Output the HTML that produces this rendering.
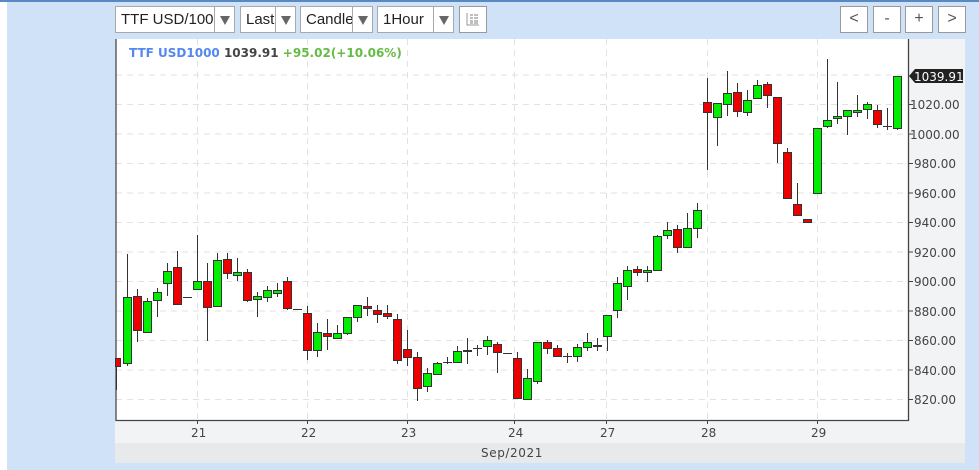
<!DOCTYPE html>
<html><head><meta charset="utf-8"><style>
body{margin:0;width:979px;height:470px;background:#cfe2f8;position:relative;overflow:hidden;font-family:"Liberation Sans",sans-serif}
.l{position:absolute;left:0;top:0;width:7px;height:470px;background:#fff}
.t{position:absolute;left:0;top:0;width:979px;height:2px;background:#5a88c2}
.sel{position:absolute;top:6px;height:25px;border:1px solid #a9a9a9;background:#fff;font-size:15px;line-height:25px;color:#222;overflow:hidden;box-sizing:content-box}
.sel span{position:absolute;left:5px;top:0;white-space:nowrap}
.sel i{position:absolute;right:0;top:0;width:19px;height:25px;border-left:1px solid #a9a9a9;background:#fff}
.sel i:after{content:"";position:absolute;left:5px;top:9px;border-left:5px solid transparent;border-right:5px solid transparent;border-top:9px solid #666}
.btn{position:absolute;top:6px;width:26px;height:25px;border:1px solid #999;background:#fff;text-align:center;line-height:24px;font-size:16px;color:#555}
</style></head><body>
<div class="l"></div><div class="t"></div>
<div class="sel" style="left:115px;width:118px"><span>TTF USD/1000</span><i></i></div>
<div class="sel" style="left:240px;width:54px"><span>Last</span><i></i></div>
<div class="sel" style="left:300px;width:71px"><span>Candle</span><i></i></div>
<div class="sel" style="left:377px;width:75px"><span>1Hour</span><i></i></div>
<div class="btn" style="left:459px;"><svg width="14" height="14" viewBox="0 0 14 14" style="margin-top:5px"><path d="M1 1V13H13" stroke="#999" fill="none"/><path d="M4 3h3M8 3h4M4 6h3M8 6h4M4 9h3M8 9h4M4 11h3M8 11h4" stroke="#aaa" stroke-width="1.4"/></svg></div>
<div class="btn" style="left:840px">&lt;</div>
<div class="btn" style="left:873px">-</div>
<div class="btn" style="left:905px">+</div>
<div class="btn" style="left:938px">&gt;</div>
<svg style="position:absolute;left:0;top:0" width="979" height="470" font-family="DejaVu Sans,sans-serif">
<rect x="115" y="39" width="850" height="424" fill="#f2f3f5"/>
<rect x="115" y="443" width="850" height="20" fill="#e8e9eb"/>
<rect x="116" y="39" width="792" height="381" fill="#fff"/>
<g stroke="#e2e2e2" stroke-dasharray="6,5" stroke-width="1">
<path d="M116 399.5H908M116 370H908M116 340.5H908M116 311H908M116 281.5H908M116 252H908M116 222.5H908M116 193H908M116 163.5H908M116 134H908M116 104.5H908M116 75H908"/>
<path d="M197.5 39V420M307.5 39V420M407.5 39V420M514.5 39V420M606.5 39V420M707.5 39V420M817.5 39V420"/>
</g>
<path d="M116 39V420.5H908.5V39" stroke="#444" fill="none" stroke-width="1.3"/>
<g stroke="#444"><path d="M908 399.5h5M908 370h5M908 340.5h5M908 311h5M908 281.5h5M908 252h5M908 222.5h5M908 193h5M908 163.5h5M908 134h5M908 104.5h5M197.5 420v4M307.5 420v4M407.5 420v4M514.5 420v4M606.5 420v4M707.5 420v4M817.5 420v4"/></g>
<g font-size="12" fill="#444">
<text x="914" y="404">820.00</text><text x="914" y="375">840.00</text><text x="914" y="345">860.00</text><text x="914" y="316">880.00</text><text x="914" y="286">900.00</text><text x="914" y="257">920.00</text><text x="914" y="227">940.00</text><text x="914" y="198">960.00</text><text x="914" y="168">980.00</text><text x="910" y="139">1000.00</text><text x="910" y="109">1020.00</text>
<text x="191" y="437">21</text><text x="301" y="437">22</text><text x="401" y="437">23</text><text x="508" y="437">24</text><text x="600" y="437">27</text><text x="701" y="437">28</text><text x="811" y="437">29</text>
<text x="481" y="457" letter-spacing="0.6">Sep/2021</text>
</g>
<path d="M909 76l6-7h48v14h-48z" fill="#222"/>
<text x="914" y="81" font-size="12" fill="#fff">1039.91</text>
<text x="129" y="57" font-size="12" font-weight="bold"><tspan fill="#5588ee">TTF USD1000</tspan><tspan fill="#444"> 1039.91</tspan><tspan fill="#66bb44"> +95.02(+10.06%)</tspan></text>
<g stroke="#333" stroke-width="1">
<path d="M116.5 358V390M127.5 254V366M137.5 289V342M147.5 298V333M157.5 288V317M167.5 263V296M177.5 251V304M197.5 235V289M207.5 263V341M217.5 253V306M227.5 253V279M237.5 258V281M247.5 269V302M257.5 292V317M267.5 286V302M277.5 283V297M287.5 277V310M307.5 306V360M317.5 323V357M327.5 319V350M337.5 325V338M347.5 317V335M357.5 305V322M367.5 297V316M377.5 305V323M387.5 305V319M397.5 314V364M407.5 330V366M417.5 352V401M427.5 368V392M437.5 362V375M447.5 357V364M457.5 346V363M467.5 338V364M477.5 345V356M487.5 336V355M497.5 342V373M517.5 352V398M527.5 369V400M537.5 342V384M547.5 340V354M557.5 345V356M567.5 353V363M577.5 344V362M587.5 333V351M597.5 338V351M607.5 315V351M617.5 277V318M627.5 266V300M637.5 266V276M647.5 266V282M657.5 235V270M667.5 222V239M677.5 225V253M687.5 213V247M697.5 203V238M707.5 78V170M717.5 103V146M727.5 71V116M737.5 83V117M747.5 90V116M757.5 80V98M767.5 82V108M777.5 97V163M787.5 148V198M797.5 183V215M827.5 59V128M837.5 82V124M847.5 110V135M857.5 95V117M867.5 102V119M877.5 105V128M887.5 108V130M897.5 76V130"/>
<path d="M183 297.5h9M293 309.5h9M443 362.5h9M473 348.5h9M503 353.5h9M563 356.5h9M883 126.5h9"/>
</g>
<g stroke="#333" stroke-width="1" fill="#00ee00">
<rect x="123.5" y="297.5" width="8" height="66"/><rect x="143.5" y="301.5" width="8" height="31"/><rect x="153.5" y="292.5" width="8" height="8"/><rect x="163.5" y="271.5" width="8" height="12"/><rect x="193.5" y="281.5" width="8" height="8"/><rect x="213.5" y="260.5" width="8" height="46"/><rect x="233.5" y="272.5" width="8" height="3"/><rect x="253.5" y="296.5" width="8" height="3"/><rect x="263.5" y="290.5" width="8" height="7"/><rect x="273.5" y="290.5" width="8" height="3"/><rect x="313.5" y="332.5" width="8" height="18"/><rect x="333.5" y="333.5" width="8" height="5"/><rect x="343.5" y="317.5" width="8" height="16"/><rect x="353.5" y="305.5" width="8" height="12"/><rect x="423.5" y="373.5" width="8" height="13"/><rect x="433.5" y="363.5" width="8" height="11"/><rect x="453.5" y="351.5" width="8" height="11"/><rect x="463.5" y="350.5" width="8" height="1"/><rect x="483.5" y="340.5" width="8" height="6"/><rect x="523.5" y="378.5" width="8" height="21"/><rect x="533.5" y="342.5" width="8" height="39"/><rect x="573.5" y="347.5" width="8" height="9"/><rect x="583.5" y="342.5" width="8" height="5"/><rect x="603.5" y="315.5" width="8" height="21"/><rect x="613.5" y="283.5" width="8" height="27"/><rect x="623.5" y="270.5" width="8" height="16"/><rect x="643.5" y="270.5" width="8" height="2"/><rect x="653.5" y="236.5" width="8" height="34"/><rect x="663.5" y="230.5" width="8" height="5"/><rect x="683.5" y="228.5" width="8" height="19"/><rect x="693.5" y="210.5" width="8" height="18"/><rect x="713.5" y="103.5" width="8" height="14"/><rect x="723.5" y="93.5" width="8" height="11"/><rect x="743.5" y="100.5" width="8" height="12"/><rect x="753.5" y="85.5" width="8" height="13"/><rect x="813.5" y="128.5" width="8" height="65"/><rect x="823.5" y="120.5" width="8" height="6"/><rect x="833.5" y="116.5" width="8" height="2"/><rect x="843.5" y="110.5" width="8" height="6"/><rect x="853.5" y="110.5" width="8" height="2"/><rect x="863.5" y="104.5" width="8" height="5"/><rect x="893.5" y="76.5" width="8" height="52"/>
</g>
<g stroke="#333" stroke-width="1" fill="#ee0000">
<rect x="115.5" y="358.5" width="5" height="8"/><rect x="133.5" y="296.5" width="8" height="34"/><rect x="173.5" y="267.5" width="8" height="37"/><rect x="203.5" y="281.5" width="8" height="26"/><rect x="223.5" y="259.5" width="8" height="14"/><rect x="243.5" y="272.5" width="8" height="28"/><rect x="283.5" y="281.5" width="8" height="27"/><rect x="303.5" y="313.5" width="8" height="37"/><rect x="323.5" y="333.5" width="8" height="3"/><rect x="363.5" y="306.5" width="8" height="2"/><rect x="373.5" y="310.5" width="8" height="4"/><rect x="383.5" y="313.5" width="8" height="3"/><rect x="393.5" y="319.5" width="8" height="41"/><rect x="403.5" y="349.5" width="8" height="8"/><rect x="413.5" y="357.5" width="8" height="31"/><rect x="493.5" y="344.5" width="8" height="8"/><rect x="513.5" y="358.5" width="8" height="40"/><rect x="543.5" y="342.5" width="8" height="6"/><rect x="553.5" y="348.5" width="8" height="8"/><rect x="593.5" y="345.5" width="8" height="1"/><rect x="633.5" y="269.5" width="8" height="3"/><rect x="673.5" y="229.5" width="8" height="18"/><rect x="703.5" y="102.5" width="8" height="10"/><rect x="733.5" y="92.5" width="8" height="19"/><rect x="763.5" y="84.5" width="8" height="11"/><rect x="773.5" y="97.5" width="8" height="46"/><rect x="783.5" y="152.5" width="8" height="46"/><rect x="793.5" y="204.5" width="8" height="11"/><rect x="803.5" y="219.5" width="8" height="3"/><rect x="873.5" y="110.5" width="8" height="14"/>
</g>
</svg>
</body></html>
